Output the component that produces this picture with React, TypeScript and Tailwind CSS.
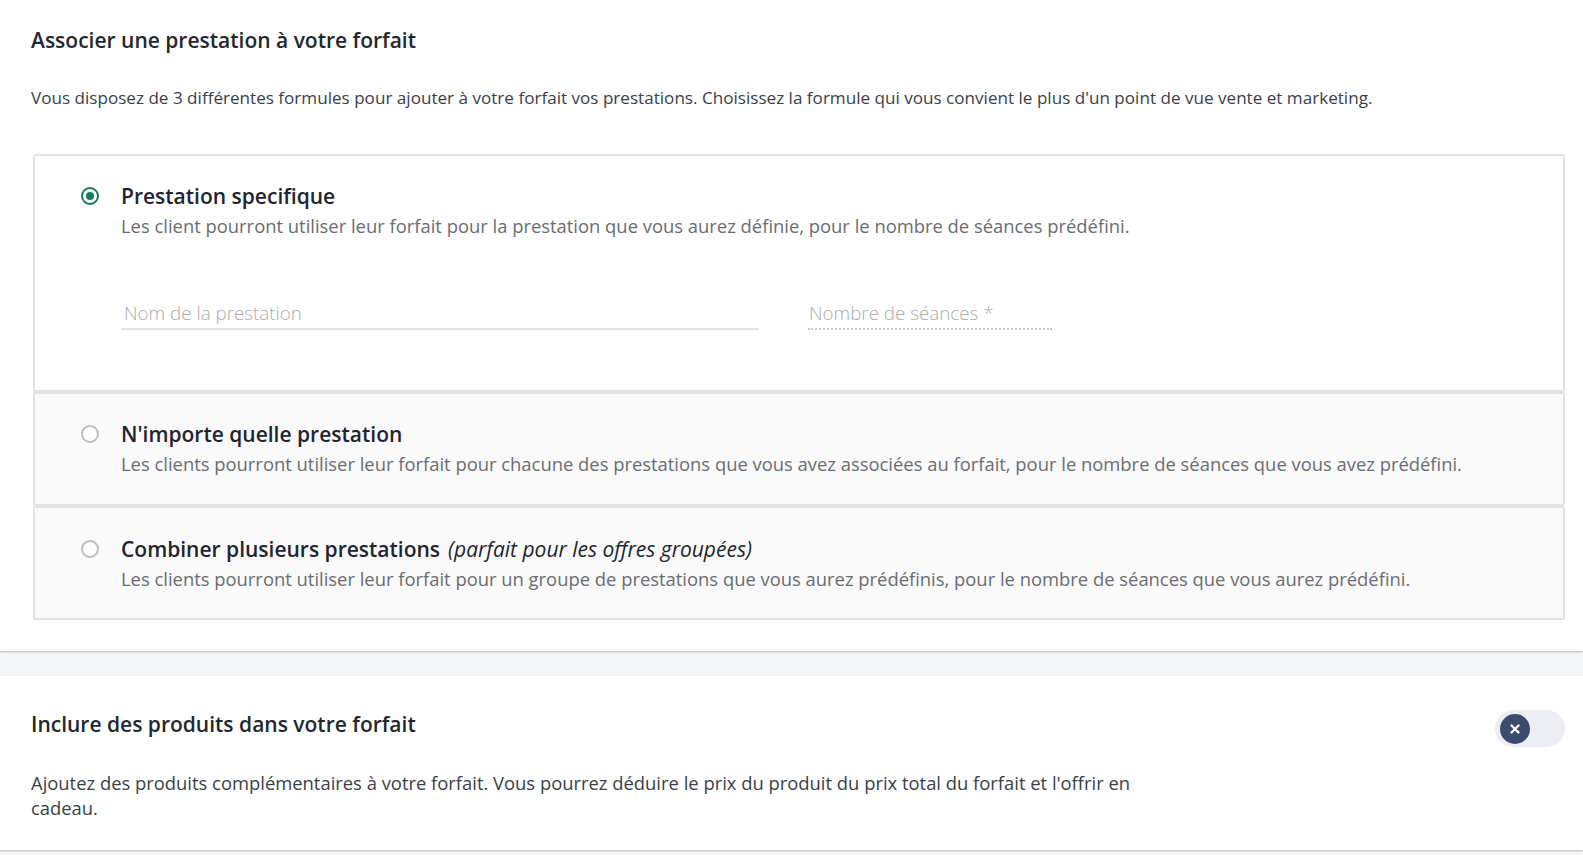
const options = [
  {
    id: 'specifique',
    title: 'Prestation specifique',
    hint: '',
    desc: 'Les client pourront utiliser leur forfait pour la prestation que vous aurez définie, pour le nombre de séances prédéfini.',
  },
  {
    id: 'quelconque',
    title: "N'importe quelle prestation",
    hint: '',
    desc: 'Les clients pourront utiliser leur forfait pour chacune des prestations que vous avez associées au forfait, pour le nombre de séances que vous avez prédéfini.',
  },
  {
    id: 'combiner',
    title: 'Combiner plusieurs prestations',
    hint: '(parfait pour les offres groupées)',
    desc: 'Les clients pourront utiliser leur forfait pour un groupe de prestations que vous aurez prédéfinis, pour le nombre de séances que vous aurez prédéfini.',
  },
];

const boxStyle: Record<string, string> = {
  specifique: 'rounded-[2px] border-2 border-[#e2e2e2] bg-white pl-[46px] pr-6 pt-[26px] pb-[60px]',
  quelconque: 'rounded-[2px] border-2 border-[#e2e2e2] bg-[#fafafa] pl-[46px] pr-6 pt-[26px] pb-[27px]',
  combiner: 'rounded-[2px] border-2 border-[#e2e2e2] bg-[#fafafa] pl-[46px] pr-6 pt-[27px] pb-[26px]',
};

function Radio({ checked }: { checked: boolean }) {
  if (checked) {
    return (
      <span className="flex h-[18px] w-[18px] items-center justify-center rounded-full border-[2.5px] border-[#137a5e]">
        <span className="h-[8px] w-[8px] rounded-full bg-[#137a5e]" />
      </span>
    );
  }
  return <span className="block h-[18px] w-[18px] rounded-full border-2 border-[#bdbdbd] bg-white" />;
}

export default function App() {
  const selected = 'specifique';
  return (
    <div className="min-h-[855px] bg-[#f5f6f8] font-['Open_Sans',sans-serif] text-[#252a33]">
      <section className="bg-white pl-[31px] pr-[18px] pt-[26px] pb-[31px] shadow-[0_1px_2px_rgba(0,0,0,0.25)]">
        <h2 className="text-[21px] font-semibold leading-[28px] text-[#23272f]">Associer une prestation à votre forfait</h2>
        <p className="mt-[32px] text-[17.1px] leading-[24px] text-[#3a3f48]">
          Vous disposez de 3 différentes formules pour ajouter à votre forfait vos prestations. Choisissez la formule qui vous convient le plus d'un point de vue vente et marketing.
        </p>

        <div className="mt-[44px] ml-[2px]">
          {options.map((o) => {
            const active = o.id === selected;
            return (
              <div key={o.id} className={boxStyle[o.id]}>
                <div className="flex items-start gap-[22px]">
                  <div className="pt-[5px]">
                    <Radio checked={active} />
                  </div>
                  <div className="flex-1">
                    <div className="text-[21px] font-semibold leading-[28px] text-[#1f2530]">
                      {o.title}
                      {o.hint && <span className="ml-[8px] font-normal italic">{o.hint}</span>}
                    </div>
                    <div className="mt-[3px] text-[18.4px] leading-[26px] text-[#6a6d72]">{o.desc}</div>

                    {active && (
                      <div className="mt-[61px] flex gap-[49px]">
                        <div className="w-[638px] border-b-2 border-[#e3e3e3] pb-[2px] pl-[3px] text-[18.8px] font-light leading-[26px] text-[#ababab]">
                          Nom de la prestation
                        </div>
                        <div className="w-[244px] border-b-2 border-dotted border-[#c9c9c9] pb-[2px] pl-[1px] text-[18.8px] font-light leading-[26px] text-[#ababab]">
                          Nombre de séances *
                        </div>
                      </div>
                    )}
                  </div>
                </div>
              </div>
            );
          })}
        </div>
      </section>

      <section className="mt-[25px] bg-white pl-[31px] pr-[18px] pt-[34px] pb-[30px] shadow-[0_1px_2px_rgba(0,0,0,0.25)]">
        <div className="flex items-start justify-between">
          <h2 className="text-[21px] font-semibold leading-[28px] text-[#23272f]">Inclure des produits dans votre forfait</h2>
          <button className="flex h-[37px] w-[70px] items-center rounded-full bg-[#eceef3] pl-[5px]">
            <span className="flex h-[30px] w-[30px] items-center justify-center rounded-full bg-[#3c4a6e]">
              <svg width="12" height="12" viewBox="0 0 12 12">
                <path d="M2.5 2.5 L9.5 9.5 M9.5 2.5 L2.5 9.5" stroke="white" strokeWidth="2.4" strokeLinecap="round" />
              </svg>
            </span>
          </button>
        </div>
        <p className="mt-[23px] max-w-[1110px] text-[18.4px] leading-[25px] text-[#3a3f48]">
          Ajoutez des produits complémentaires à votre forfait. Vous pourrez déduire le prix du produit du prix total du forfait et l'offrir en cadeau.
        </p>
      </section>
    </div>
  );
}
